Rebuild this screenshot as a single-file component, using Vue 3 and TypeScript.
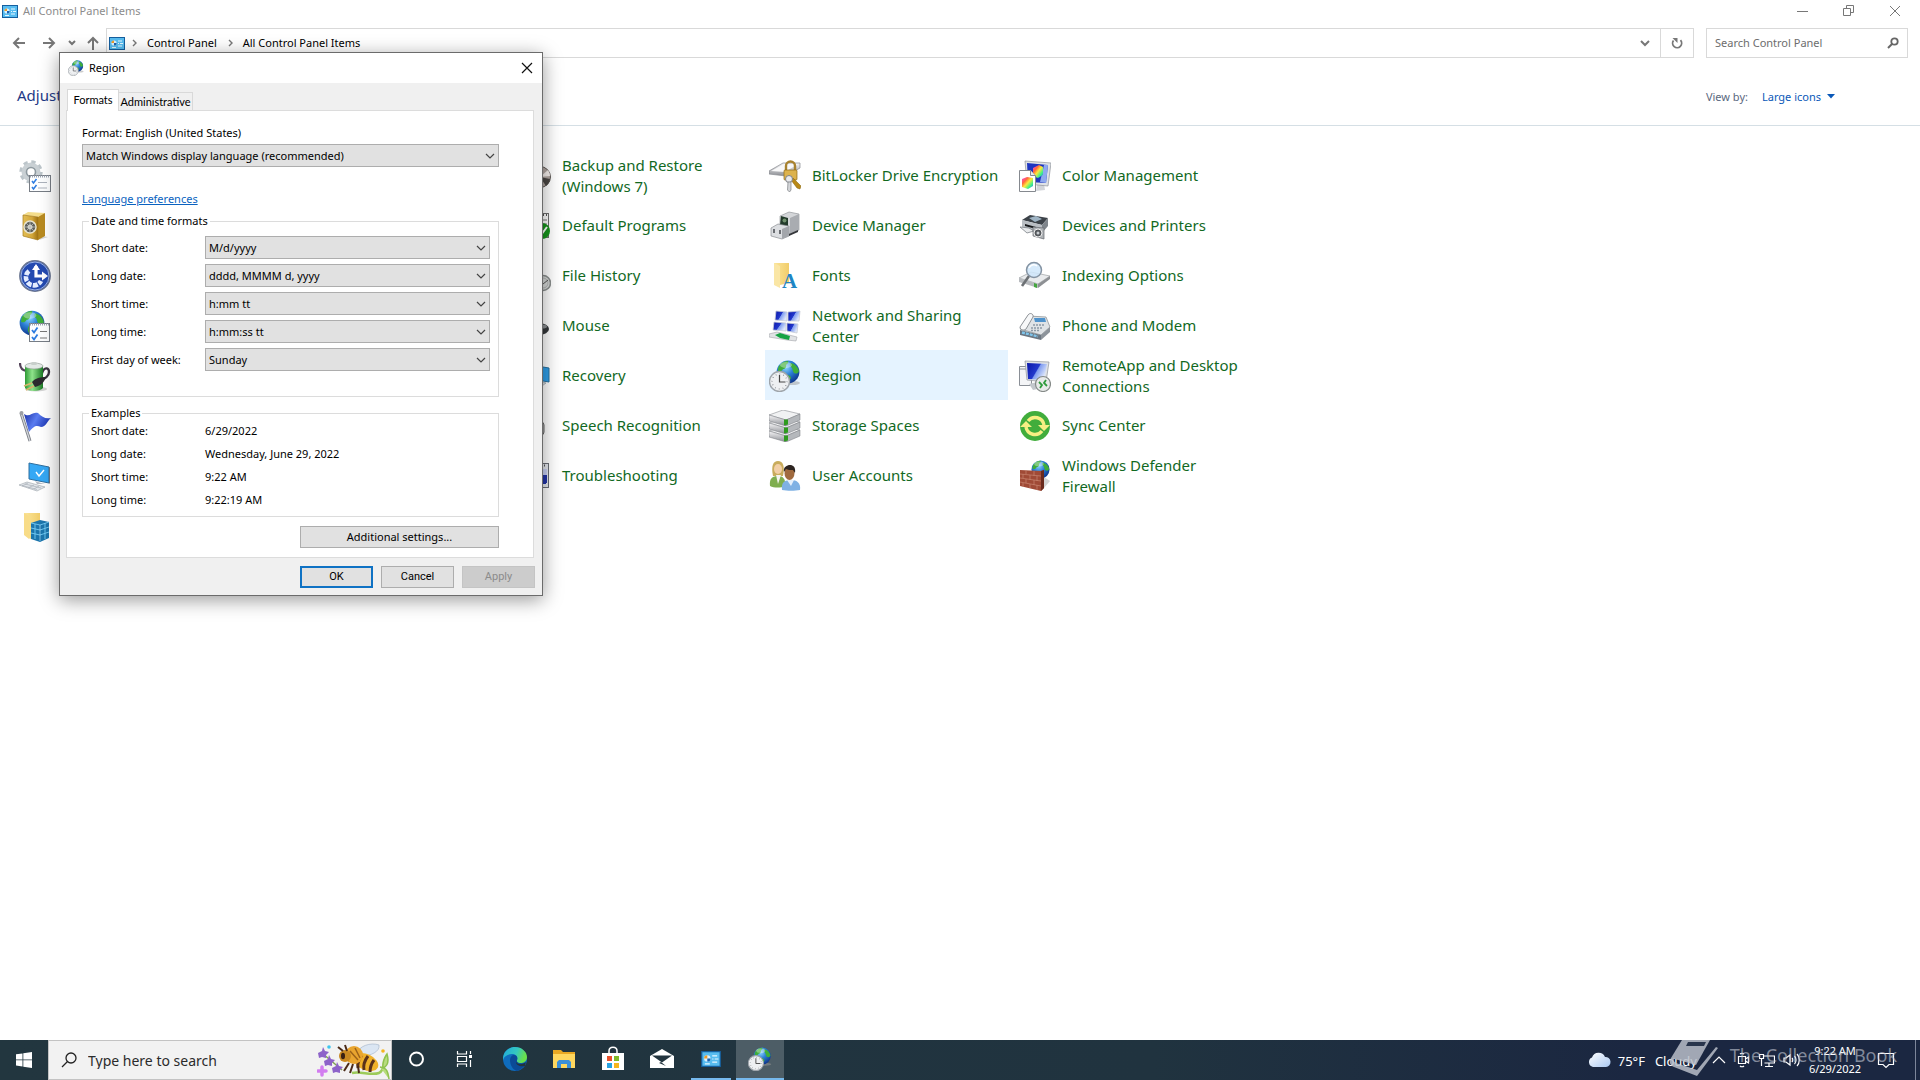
<script setup lang="ts">
import { reactive } from 'vue'

interface PanelItem {
  label: string
  icon: string
  active?: boolean
  iconOnly?: boolean
}

interface FormatRow {
  id: string
  label: string
  value: string
}

const items: PanelItem[] = [
  { label: 'Administrative Tools', icon: 'admin', iconOnly: true },
  { label: 'AutoPlay', icon: 'generic', iconOnly: true },
  { label: 'Backup and Restore (Windows 7)', icon: 'backup' },
  { label: 'BitLocker Drive Encryption', icon: 'bitlocker' },
  { label: 'Color Management', icon: 'color' },
  { label: 'Credential Manager', icon: 'safe', iconOnly: true },
  { label: 'Date and Time', icon: 'generic', iconOnly: true },
  { label: 'Default Programs', icon: 'default' },
  { label: 'Device Manager', icon: 'device' },
  { label: 'Devices and Printers', icon: 'printer' },
  { label: 'Ease of Access Center', icon: 'ease', iconOnly: true },
  { label: 'File Explorer Options', icon: 'generic', iconOnly: true },
  { label: 'File History', icon: 'history' },
  { label: 'Fonts', icon: 'fonts' },
  { label: 'Indexing Options', icon: 'indexing' },
  { label: 'Internet Options', icon: 'internet', iconOnly: true },
  { label: 'Keyboard', icon: 'generic', iconOnly: true },
  { label: 'Mouse', icon: 'mouse' },
  { label: 'Network and Sharing Center', icon: 'network' },
  { label: 'Phone and Modem', icon: 'phone' },
  { label: 'Power Options', icon: 'power', iconOnly: true },
  { label: 'Programs and Features', icon: 'generic', iconOnly: true },
  { label: 'Recovery', icon: 'recovery' },
  { label: 'Region', icon: 'region', active: true },
  { label: 'RemoteApp and Desktop Connections', icon: 'remote' },
  { label: 'Security and Maintenance', icon: 'flag', iconOnly: true },
  { label: 'Sound', icon: 'generic', iconOnly: true },
  { label: 'Speech Recognition', icon: 'speech' },
  { label: 'Storage Spaces', icon: 'storage' },
  { label: 'Sync Center', icon: 'sync' },
  { label: 'System', icon: 'system', iconOnly: true },
  { label: 'Taskbar and Navigation', icon: 'generic', iconOnly: true },
  { label: 'Troubleshooting', icon: 'trouble' },
  { label: 'User Accounts', icon: 'users' },
  { label: 'Windows Defender Firewall', icon: 'firewall' },
  { label: 'Work Folders', icon: 'work', iconOnly: true },
]

const formats = reactive<FormatRow[]>([
  { id: 'short-date', label: 'Short date:', value: 'M/d/yyyy' },
  { id: 'long-date', label: 'Long date:', value: 'dddd, MMMM d, yyyy' },
  { id: 'short-time', label: 'Short time:', value: 'h:mm tt' },
  { id: 'long-time', label: 'Long time:', value: 'h:mm:ss tt' },
  { id: 'first-day', label: 'First day of week:', value: 'Sunday' },
])

const examples = [
  ['Short date:', '6/29/2022'],
  ['Long date:', 'Wednesday, June 29, 2022'],
  ['Short time:', '9:22 AM'],
  ['Long time:', '9:22:19 AM'],
]

const pinned = [
  { name: 'Cortana', icon: 'cortana' },
  { name: 'Task View', icon: 'taskview' },
  { name: 'Microsoft Edge', icon: 'edge' },
  { name: 'File Explorer', icon: 'explorer' },
  { name: 'Microsoft Store', icon: 'store' },
  { name: 'Mail', icon: 'mail' },
  { name: 'Control Panel', icon: 'cpanel', running: true },
  { name: 'Region settings', icon: 'region', running: true, focused: true },
]
</script>

<template>
  <div class="screen">
    <svg class="sprite" width="0" height="0" aria-hidden="true">
      <defs>
        <radialGradient id="g-globe" cx="0.4" cy="0.3" r="0.75">
          <stop offset="0" stop-color="#8fd6ff" /><stop offset="0.45" stop-color="#2b7fd4" /><stop offset="1" stop-color="#0b2f86" />
        </radialGradient>
        <linearGradient id="g-screen" x1="0" y1="0" x2="1" y2="0.5">
          <stop offset="0" stop-color="#0a16a8" /><stop offset="0.55" stop-color="#2238cc" /><stop offset="0.6" stop-color="#7f9cf0" /><stop offset="1" stop-color="#dfe8fb" />
        </linearGradient>
        <linearGradient id="g-cube" x1="0" y1="0" x2="1" y2="1">
          <stop offset="0" stop-color="#ff3cf0" /><stop offset="0.3" stop-color="#ff6a3c" /><stop offset="0.5" stop-color="#ffe93c" /><stop offset="0.75" stop-color="#3cf08a" /><stop offset="1" stop-color="#3c6aff" />
        </linearGradient>
        <linearGradient id="g-gold" x1="0" y1="0" x2="1" y2="0">
          <stop offset="0" stop-color="#e3be55" /><stop offset="0.6" stop-color="#d3a73a" /><stop offset="1" stop-color="#9f7212" />
        </linearGradient>
        <linearGradient id="g-metal" x1="0" y1="0" x2="0" y2="1">
          <stop offset="0" stop-color="#f7f7f8" /><stop offset="1" stop-color="#8d8f95" />
        </linearGradient>
        <linearGradient id="g-green" x1="0" y1="0" x2="1" y2="0">
          <stop offset="0" stop-color="#2d9a35" /><stop offset="0.4" stop-color="#8fe48b" /><stop offset="1" stop-color="#1c7a26" />
        </linearGradient>
        <linearGradient id="g-edge" x1="0" y1="0" x2="1" y2="0.3">
          <stop offset="0" stop-color="#1fa8dd" /><stop offset="0.6" stop-color="#35c8c0" /><stop offset="1" stop-color="#6ae04a" />
        </linearGradient>
        <linearGradient id="g-cloud" x1="0" y1="0" x2="1" y2="1">
          <stop offset="0" stop-color="#ffffff" /><stop offset="1" stop-color="#a9c8f2" />
        </linearGradient>
        <linearGradient id="g-folder" x1="0" y1="0" x2="1" y2="0">
          <stop offset="0" stop-color="#fbe59a" /><stop offset="1" stop-color="#f1cd6a" />
        </linearGradient>
        <linearGradient id="g-flag" x1="0" y1="0" x2="1" y2="0.4">
          <stop offset="0" stop-color="#1b2fa5" /><stop offset="0.5" stop-color="#5a7cf0" /><stop offset="1" stop-color="#1d36b4" />
        </linearGradient>
      </defs>

      <symbol id="globe" viewBox="0 0 24 24">
        <circle cx="12" cy="12" r="11.4" fill="url(#g-globe)" />
        <path d="M3 6C6 2 9 1 12 1c1 2-1 3-2 4 1 2-1 4-3 4-1 2-3 3-5 2 0-2 0-3 1-5zM15 3c4 1 7 4 8 8-1 3-3 3-5 2-2-3-1-5-3-6-1-2-1-3 0-4zM9 15c3-1 6 1 6 3-1 2-3 4-4 5-2-1-4-5-2-8z" fill="#3fae3a" />
        <ellipse cx="10" cy="5" rx="6" ry="3" fill="#fff" opacity=".35" />
      </symbol>

      <symbol id="generic" viewBox="0 0 32 32"><rect x="5" y="5" width="22" height="20" fill="#cfd8e4" stroke="#7b8796" /></symbol>

      <symbol id="admin" viewBox="0 0 32 32">
        <circle cx="12" cy="12" r="7" fill="none" stroke="#c9d0d4" stroke-width="5" />
        <circle cx="12" cy="12" r="10.4" fill="none" stroke="#bcc5ca" stroke-width="2.6" stroke-dasharray="4.4 3.770" />
        <circle cx="12" cy="12" r="4.500" fill="none" stroke="#8e999f" stroke-width="1.6" />
        <rect x="10.500" y="15.500" width="21" height="16" fill="#fdfeff" stroke="#777d85" />
        <path d="M11 16.500h20" stroke="#9ba4b2" stroke-width="2" stroke-dasharray="1 1" />
        <path d="M13 21l1.500 2 3-4M13 27l1.500 2 3-4" fill="none" stroke="#2c7be0" stroke-width="1.500" />
        <path d="M19 22.500h9M19 28h9" stroke="#adb3bd" />
      </symbol>

      <symbol id="safe" viewBox="0 0 32 32">
        <path d="M20 30l9-3-6-1z" fill="#bbb" opacity=".6" />
        <path d="M4 5l5-3 17 1-5 4z" fill="#f4dd8b" /><path d="M19 7l7-4v23l-7 4z" fill="#b88a20" />
        <path d="M4 5l15 2v23L4 26z" fill="url(#g-gold)" stroke="#a57b1c" stroke-width=".7" />
        <circle cx="11" cy="17" r="6" fill="#5d605c" stroke="#e8e4cf" stroke-width="1.500" /><circle cx="11" cy="17" r="2.500" fill="#dcdcd6" />
        <path d="M11 11v12M5 17h12M7 13l8 8M15 13l-8 8" stroke="#bfc0ba" stroke-width=".8" />
      </symbol>

      <symbol id="ease" viewBox="0 0 32 32">
        <circle cx="16" cy="16" r="15.200" fill="#244ab0" stroke="#6c7791" stroke-width="1.400" /><circle cx="16" cy="16" r="14" fill="none" stroke="#b9cdf2" stroke-width=".8" />
        <path d="M10 11a8 8 0 1012 10" fill="none" stroke="#e4edff" stroke-width="4.600" stroke-dasharray="5 1.200" />
        <path d="M17 6v10h7" fill="none" stroke="#fff" stroke-width="3.200" /><path d="M23 11.500l6 4.500-6 4.500zM13 10l4-6 4 6z" fill="#fff" />
      </symbol>

      <symbol id="internet" viewBox="0 0 32 32">
        <use href="#globe" x="0" y="0" width="26" height="26" />
        <rect x="10.500" y="13.500" width="20" height="18" fill="#fdfeff" stroke="#777d85" />
        <path d="M11 14.500h19" stroke="#9ba4b2" stroke-width="2" stroke-dasharray="1 1" />
        <path d="M13 20l2 2.500 3.500-5M13 27l2 2.500 3.500-5" fill="none" stroke="#2c7be0" stroke-width="1.800" /><path d="M21 21.500h7M21 28h7" stroke="#777" />
      </symbol>

      <symbol id="power" viewBox="0 0 32 32">
        <path d="M23 13c2-6 7-6 7-1 0 4-4 7-9 8" fill="none" stroke="#3a3340" stroke-width="2.400" /><path d="M1 3c0 4 2 7 6 8" fill="none" stroke="#54445a" stroke-width="2.200" />
        <ellipse cx="17" cy="29" rx="11" ry="2.500" fill="#aaa" opacity=".5" />
        <path d="M6 6h18v22c-3 4-15 4-18 0z" fill="url(#g-green)" />
        <ellipse cx="15" cy="6" rx="9" ry="3" fill="#e3e9e6" stroke="#8a938e" stroke-width=".6" /><rect x="12" y="2" width="6" height="3" rx="1.500" fill="#c8cfcb" />
        <path d="M27 17c-5 0-11 1-14 5l3 5c5-1 9-4 11-10z" fill="#2c2b2e" /><path d="M13 23l-8 3M15 26l-8 4" stroke="#d8b46a" stroke-width="1.800" />
      </symbol>

      <symbol id="flag" viewBox="0 0 32 32">
        <path d="M2 3l9 28" stroke="#7b7f86" stroke-width="3" /><path d="M2 3l9 28" stroke="#d6d9dd" stroke-width="1.200" /><circle cx="2.500" cy="3" r="2" fill="#9c9fa5" />
        <path d="M5 4c6 4 8-3 14-1 4 4 7 6 13 5-4 3-5 9-10 9-5-2-7-1-12 5z" fill="url(#g-flag)" />
      </symbol>

      <symbol id="system" viewBox="0 0 32 32">
        <path d="M10 3l20 4v16l-20-4z" fill="#35a8f5" stroke="#2f6f9f" /><path d="M30 7l1 .5V24l-1-1z" fill="#6e7780" />
        <path d="M17 12l3 4 5-6" fill="none" stroke="#fff" stroke-width="1.400" /><path d="M16 21l6 2 4 1-8 0z" fill="#b7bcc4" />
        <path d="M0 25l8-3 18 5-8 4z" fill="#e2e6ea" stroke="#9ba2aa" stroke-width=".6" /><path d="M3 25.500l15 4M6 24l16 4M9 23l-6 3M15 25l-6 3M20 26l-5 3" stroke="#a8afb7" stroke-width=".7" />
      </symbol>

      <symbol id="work" viewBox="0 0 32 32">
        <path d="M5 3h16v23l-10 3-6-5z" fill="url(#g-folder)" /><path d="M5 3l5 3v23l-5-4z" fill="#f8dc88" />
        <path d="M12 13l9-3 9 2v16l-9 4-9-3z" fill="#1c76ad" />
        <path d="M12 13l9 2 9-3M12 18l9 2 9-3M12 23l9 2 9-3M16 14v15M26 13v16" fill="none" stroke="#75cdf5" stroke-width=".9" /><path d="M21 15v16" stroke="#bfeaff" stroke-width=".6" />
      </symbol>

      <symbol id="backup" viewBox="0 0 32 32">
        <circle cx="21" cy="17" r="10.500" fill="#b0a5a0" stroke="#5e5956" /><path d="M21 17l8-7a10 10 0 012 6z" fill="#f5efec" /><path d="M21 17l10 2a10 10 0 01-4 7z" fill="#4a4643" /><circle cx="21" cy="17" r="3" fill="#fff" />
      </symbol>
      <symbol id="default" viewBox="0 0 32 32">
        <rect x="8.500" y="3.500" width="21" height="24" fill="#fff" stroke="#707070" /><path d="M12 5h16" stroke="#555" stroke-width="2" stroke-dasharray="1 2" /><path d="M22 10h6M22 14h6M22 18h6" stroke="#777" />
        <circle cx="23" cy="21" r="8" fill="#16951b" /><path d="M19 22l3 3 6-8" fill="none" stroke="#fff" stroke-width="2" />
      </symbol>
      <symbol id="history" viewBox="0 0 32 32">
        <circle cx="24" cy="23" r="7.500" fill="#d7dad9" stroke="#8a8e8d" stroke-width="1.600" /><circle cx="24" cy="23" r="5" fill="none" stroke="#aaa" stroke-width=".8" /><path d="M21 21l3 3 5-4" fill="none" stroke="#555" />
      </symbol>
      <symbol id="mouse" viewBox="0 0 32 32"><ellipse cx="20" cy="19" rx="10" ry="6" fill="#34373a" /><ellipse cx="23" cy="16.500" rx="5" ry="2" fill="#8b8f92" /></symbol>
      <symbol id="recovery" viewBox="0 0 32 32"><path d="M12 5l18 3v14l-18-3z" fill="#2f9fe9" stroke="#26709f" /><path d="M20 21l7 2-4 3-6-2z" fill="#d5dde3" stroke="#8c979f" stroke-width=".6" /></symbol>
      <symbol id="speech" viewBox="0 0 32 32"><rect x="15" y="12" width="10" height="13" rx="3" fill="#b5b5b5" stroke="#666" /></symbol>
      <symbol id="trouble" viewBox="0 0 32 32">
        <rect x="8.500" y="3.500" width="21" height="24" fill="#e6e9ef" stroke="#6a6e76" /><path d="M10 5.500h18" stroke="#555" stroke-width="2" stroke-dasharray="1 2" /><rect x="12" y="9" width="15" height="15" fill="#2335a8" /><path d="M22 9h6v6h-6z" fill="#c9d0f4" /><path d="M22 15h6v8h-6z" fill="#2335a8" />
      </symbol>

      <symbol id="bitlocker" viewBox="0 0 32 32">
        <path d="M0 11l14-8h17v5l-14 8-17-2z" fill="url(#g-metal)" stroke="#888b90" stroke-width=".7" /><path d="M2 11l13-7 14 0-13 8z" fill="#f8f8f9" />
        <path d="M17 11V6a4.500 4.500 0 019 0v5" fill="none" stroke="#a8822f" stroke-width="2.400" /><rect x="15" y="10" width="13" height="10" rx="1" fill="#ddb34d" stroke="#8f6a14" stroke-width=".7" />
        <path d="M24 18l8 8-1 3-3-1-6-8z" fill="#b98916" stroke="#83600c" stroke-width=".5" />
        <circle cx="20" cy="19" r="3.500" fill="#e9eaec" stroke="#7c7f84" /><path d="M19 22h3v8l-1.500 2-2-2z" fill="#d4d6d9" stroke="#7c7f84" stroke-width=".7" />
      </symbol>
      <symbol id="color" viewBox="0 0 32 32">
        <path d="M18 25l7-1 1 6-9 1z" fill="#d2d5da" /><path d="M6 1l26 2-3 23-21-2z" fill="#dfe2e6" stroke="#8f949b" stroke-width=".7" /><path d="M8 3l21 2-2 18-18-1z" fill="#1e35c0" /><path d="M25 5l4 0-2 18-6-1z" fill="#8ea9ee" />
        <path d="M14 8l6-3 4 2v8l-5 3-5-2z" fill="url(#g-cube)" />
        <path d="M.5 10.500h11l5 5v16H.500z" fill="#fff" stroke="#85898f" /><path d="M11.500 10.500v5h5" fill="#e8e8e8" stroke="#85898f" />
        <path d="M3 19l5-2 6 1v8l-5 3-6-2z" fill="url(#g-cube)" />
      </symbol>
      <symbol id="device" viewBox="0 0 32 32">
        <path d="M11 6l9-4 10 2v16l-9 4-10-4z" fill="#d4d6d9" stroke="#86898e" stroke-width=".6" /><path d="M21 24l9-4V4l-9 4z" fill="#a9acb1" />
        <path d="M12 6l7 2v9l-8-2z" fill="#223a2a" /><circle cx="15.500" cy="10.500" r="2" fill="#6f8f6c" />
        <path d="M2 18l7-4 11 2v10l-7 3-11-3z" fill="#dcdee1" stroke="#7b7e83" stroke-width=".6" /><path d="M13 19l7-3v10l-7 3z" fill="#a3a6ab" /><path d="M4 19h2v4H4zM10 20h2v4h-2z" fill="#6a6d72" /><path d="M20 24l9-4v2l-9 4z" fill="#34363a" />
      </symbol>
      <symbol id="printer" viewBox="0 0 32 32">
        <path d="M3 10l8-5 18 3-6 7z" fill="#3c4248" /><path d="M10 8l7-2 6 3-7 3z" fill="#9fb4c4" /><path d="M3 10l20 5v8L3 17z" fill="#b9bec3" /><path d="M23 15l6-7v8l-6 7z" fill="#7f858b" />
        <path d="M6 14l11 3v2L6 16z" fill="#17191b" /><path d="M1 17l9 1 5 3-7 2z" fill="#e8eaec" stroke="#6d7278" stroke-width=".7" />
        <path d="M14 17l11 1v11l-11-3z" fill="#aeb2b6" stroke="#65696e" stroke-width=".7" /><circle cx="19" cy="23" r="4" fill="#54585c" stroke="#eee" /><circle cx="19" cy="23" r="1.500" fill="#c8ccd0" />
      </symbol>
      <symbol id="fonts" viewBox="0 0 32 32">
        <path d="M5 3h15v20l-9 2-6-2z" fill="url(#g-folder)" /><path d="M5 3l6 3v22l-6-3z" fill="#fae6a5" />
        <text x="13" y="28" font-family="Liberation Serif, serif" font-size="21" font-weight="700" fill="#1f86c4">A</text>
      </symbol>
      <symbol id="indexing" viewBox="0 0 32 32">
        <path d="M0 18l12-6 19 4-12 8z" fill="#e9ebed" stroke="#8f9397" stroke-width=".6" /><path d="M0 18l19 6v4L0 22z" fill="#b7babe" /><path d="M19 24l12-8v3l-12 9z" fill="#8d9094" /><path d="M15 23l3 1v4l-3-1z" fill="#45a63f" />
        <path d="M10 16L3 26" stroke="#6c7074" stroke-width="2.600" /><circle cx="15" cy="10" r="7.500" fill="#cfe6fa" fill-opacity=".85" stroke="#8493a3" stroke-width="1.500" /><path d="M10 8c2-4 6-4 8-2" stroke="#fff" stroke-width="1.500" fill="none" />
      </symbol>
      <symbol id="network" viewBox="0 0 32 32">
        <g fill="url(#g-screen)" stroke="#c9cdd6" stroke-width=".8"><path d="M7 1l11 1v9L6 10z" /><path d="M19 2l12-1-1 10-11 0z" /><path d="M5 12l12 1v8L4 20z" /><path d="M18 13l11 1-1 9-10-2z" /></g>
        <path d="M0 24l8-2 20 5-1 4-9-1L0 27z" fill="#e1e3e5" stroke="#a2a5a9" stroke-width=".6" /><path d="M6 25l5-2 10 3-1 4-9-2z" fill="#17a343" />
      </symbol>
      <symbol id="phone" viewBox="0 0 32 32">
        <path d="M1 19l8-13 18 1 4 10-9 8z" fill="#dfe3e6" stroke="#81868b" stroke-width=".7" /><path d="M1 20l21 5v5L1 25z" fill="#6b7681" /><path d="M22 25l9-8v5l-9 8z" fill="#8d949b" /><path d="M3 22.500l16 4" stroke="#7fc4ea" stroke-width="2.400" stroke-dasharray="3 1" />
        <path d="M15 8l11 0 1 4-11 0z" fill="#4f93cc" /><path d="M1 17L9 5c2-3 6-1 5 2L7 19c-2 2-6 1-6-2z" fill="#f7f8f9" stroke="#81868b" stroke-width=".9" />
        <path d="M14 15h11M12 18h11M12 20.500h8" stroke="#8d9ba7" stroke-width="1.400" stroke-dasharray="2 1" />
      </symbol>
      <symbol id="region" viewBox="0 0 32 32">
        <ellipse cx="23" cy="23" rx="8" ry="2" fill="#999" opacity=".5" /><use href="#globe" x="7" y="0" width="24" height="24" />
        <circle cx="10.500" cy="21.500" r="10" fill="#eef0f2" stroke="#9fa5ab" stroke-width="1.400" /><circle cx="10.500" cy="21.500" r="7.500" fill="none" stroke="#70757a" stroke-width="1.200" stroke-dasharray=".7 3.200" />
        <path d="M10.500 15v7h6" fill="none" stroke="#444" stroke-width="1.200" />
      </symbol>
      <symbol id="remote" viewBox="0 0 32 32">
        <path d="M.5 6.500h12v19H.500z" fill="#f4f5f7" stroke="#8a8f96" /><path d="M1 9h11" stroke="#8a8f96" />
        <path d="M10 24l8-2 5 6-9 2z" fill="#c3c7cc" /><path d="M6 1l24 1-3 20-19-2z" fill="#dfe2e6" stroke="#8f949b" stroke-width=".7" /><path d="M8 3l20 1-3 16-16-1z" fill="url(#g-screen)" />
        <circle cx="24" cy="24" r="7.500" fill="#e8eae9" stroke="#858a88" stroke-width="1.200" /><path d="M20 22l3 3-2 3M28 26l-3-3 2-3" fill="none" stroke="#2f9b3c" stroke-width="1.800" />
      </symbol>
      <symbol id="storage" viewBox="0 0 32 32">
        <g id="drive"><path d="M0 21l14-5 17 4-14 6z" fill="#f1f2f3" stroke="#8c8f94" stroke-width=".6" /><path d="M0 21l17 5v6L0 27z" fill="url(#g-metal)" stroke="#77797e" stroke-width=".5" /><path d="M17 26l14-6v6l-14 6z" fill="#b5b8bc" stroke="#77797e" stroke-width=".5" /><path d="M15 25.500l4 0v5l-4 1z" fill="#2e9b1e" /></g>
        <use href="#drive" y="-8" /><use href="#drive" y="-16" />
      </symbol>
      <symbol id="sync" viewBox="0 0 32 32">
        <circle cx="16" cy="16" r="15" fill="#41ad3c" /><path d="M9 11a9 9 0 0116 4M23 21a9 9 0 01-16-4" fill="none" stroke="#f7ef83" stroke-width="3.400" />
        <path d="M19 15h12l-6 6zM1 17h12l-6-6z" fill="#f7ef83" />
      </symbol>
      <symbol id="users" viewBox="0 0 32 32">
        <path d="M1 26c-1-8 3-10 8-10s8 3 7 10c-4 2-11 2-15 0z" fill="#7fae4f" /><path d="M4 16C2 6 4 1 9 1s7 5 5 15z" fill="#c9ac5c" /><ellipse cx="9" cy="9" rx="4" ry="5" fill="#f2cfa6" />
        <path d="M7 15l2 9 3-9z" fill="#f5f5ef" /><path d="M13 30c-1-8 3-10 9-10s10 3 9 10c-5 1-13 1-18 0z" fill="#7fb1e4" /><ellipse cx="20.500" cy="13" rx="5" ry="7" fill="#a06a3e" /><path d="M15 12c-1-5 3-7 6-7s6 2 5 8l-2-3c-3 0-5 0-7-1z" fill="#2d2521" /><path d="M18 20l4 6 3-6z" fill="#e6f0fb" />
      </symbol>
      <symbol id="firewall" viewBox="0 0 32 32">
        <use href="#globe" x="12" y="0" width="19" height="19" /><path d="M25 17l6 4-6 7z" fill="#aaa" opacity=".5" />
        <path d="M1 10l21 1 3-1v18l-3 3L1 26z" fill="#a04a36" /><path d="M22 11l3-1v18l-3 3z" fill="#6b2b1d" />
        <path d="M1 14l21 2M1 18l21 3M1 22l21 4M7 10v4M15 11v5M4 14v4M11 15v5M18 16v5M7 19v4M15 20v5M4 23v4M11 24v4M18 25v5" stroke="#c98570" stroke-width=".7" />
      </symbol>

      <symbol id="cpanel" viewBox="0 0 16 13">
        <rect x=".5" y=".5" width="15" height="12" fill="#58bdf0" stroke="#155f9f" />
        <circle cx="5" cy="6" r="2.600" fill="#d9f1ff" /><path d="M5 6V3.400A2.600 2.600 0 002.400 6z" fill="#f19b27" /><path d="M5 6h2.600A2.600 2.600 0 015 8.600z" fill="#1d62b0" />
        <path d="M9 3.500h4v1H9zM9 6h1v1H9zM11 6h3v1h-3zM9 8.500h4v1H9zM3 10h4v1H3z" fill="#e6f7ff" />
      </symbol>

      <symbol id="cortana" viewBox="0 0 32 32"><circle cx="15.500" cy="16" r="6.500" fill="none" stroke="#fff" stroke-width="2" /></symbol>
      <symbol id="taskview" viewBox="0 0 32 32"><path d="M7.500 8v3h9V8M7.500 24v-3h9v3M7.500 13.500h9v5h-9zM20.500 8v3M20.500 17v7" fill="none" stroke="#fff" stroke-width="1.200" /><path d="M19 12h3v3h-3z" fill="#fff" /></symbol>
      <symbol id="edge" viewBox="0 0 32 32">
        <circle cx="16" cy="16" r="12" fill="#0f6cbd" /><path d="M4 15C5 7 11 4 16 4c7 0 12 5 12 10 0 4-3 6-7 6-3 0-4-1-3-3 1-3-1-6-5-6-4 0-8 2-9 6z" fill="url(#g-edge)" />
        <path d="M11 17c0-3 2-5 4-5 3 0 4 3 3 5-1 3 4 4 7 3l1 2c-2 3-5 5-8 6-4-1-7-6-7-11z" fill="#0b4a97" /><path d="M17 19c2 3 6 3 10 0l-1 4c-5 1-9-1-9-4z" fill="#22333d" />
      </symbol>
      <symbol id="explorer" viewBox="0 0 32 32"><path d="M5 7h8l2 2h12v16H5z" fill="#e9a823" /><path d="M5 11h22v14H5z" fill="#ffd75e" /><path d="M9 25v-6l2-2h10l2 2v6h-4v-4h-6v4z" fill="#3b8fd8" /></symbol>
      <symbol id="store" viewBox="0 0 32 32"><path d="M12 11V8c0-5 8-5 8 0v3" fill="none" stroke="#fff" stroke-width="1.500" /><path d="M5 10h22v17H5z" fill="#fff" /><path d="M10 13h5v5h-5z" fill="#e8502a" /><path d="M17 13h5v5h-5z" fill="#7fba28" /><path d="M10 20h5v5h-5z" fill="#27a3e3" /><path d="M17 20h5v5h-5z" fill="#f8b61c" /></symbol>
      <symbol id="mail" viewBox="0 0 32 32"><path d="M4 13L16 6l12 7v12H4z" fill="#fff" /><path d="M6 12.500h20L16 19.500z" fill="#22343e" /><path d="M15 19l5 4-7-3z" fill="#22343e" /></symbol>
    </svg>

    <main class="window">
      <header class="titlebar">
        <svg width="16" height="13"><use href="#cpanel" /></svg>
        <span class="title-text">All Control Panel Items</span>
        <div class="caption">
          <button type="button" aria-label="Minimize"><svg width="12" height="12" viewBox="0 0 12 12"><path d="M0 6.500h11" stroke="#777" /></svg></button>
          <button type="button" aria-label="Restore"><svg width="12" height="12" viewBox="0 0 12 12"><path d="M.5 3.500h7v7h-7zM3.500 3V.500h7v7H8" fill="none" stroke="#777" /></svg></button>
          <button type="button" aria-label="Close"><svg width="12" height="12" viewBox="0 0 12 12"><path d="M1 1l10 10M11 1L1 11" stroke="#777" /></svg></button>
        </div>
      </header>

      <nav class="toolbar">
        <div class="arrows">
          <button type="button" aria-label="Back"><svg width="14" height="14" viewBox="0 0 14 14"><path d="M13 7H2M7 2L2 7l5 5" class="arrow" /></svg></button>
          <button type="button" aria-label="Forward"><svg width="14" height="14" viewBox="0 0 14 14"><path d="M1 7h11M7 2l5 5-5 5" class="arrow" /></svg></button>
          <button type="button" class="narrow" aria-label="Recent locations"><svg width="8" height="8" viewBox="0 0 8 8"><path d="M1 2l3 3 3-3" class="arrow" /></svg></button>
          <button type="button" class="up" aria-label="Up"><svg width="14" height="14" viewBox="0 0 14 14"><path d="M7 14V2M2 7l5-5 5 5" class="arrow" /></svg></button>
        </div>
        <div class="address">
          <svg width="16" height="13"><use href="#cpanel" /></svg>
          <svg class="sep" width="6" height="8" viewBox="0 0 6 8"><path d="M1 1l3 3-3 3" /></svg>
          <a href="#control-panel">Control Panel</a>
          <svg class="sep" width="6" height="8" viewBox="0 0 6 8"><path d="M1 1l3 3-3 3" /></svg>
          <a href="#all-items">All Control Panel Items</a>
          <button type="button" class="drop" aria-label="Previous locations"><svg width="12" height="10" viewBox="0 0 12 10"><path d="M2 3l4 4 4-4" fill="none" stroke="#777" stroke-width="2" /></svg></button>
          <button type="button" class="refresh" aria-label="Refresh"><svg width="14" height="14" viewBox="0 0 14 14"><path d="M3.500 4.500a4.500 4.500 0 107-.3" fill="none" stroke="#777" stroke-width="1.800" /><path d="M2.500 2h5v5z" fill="#777" /></svg></button>
        </div>
        <label class="search">
          <input type="text" placeholder="Search Control Panel" aria-label="Search Control Panel" />
          <svg width="12" height="12" viewBox="0 0 12 12"><circle cx="7.500" cy="4.500" r="3.200" fill="none" stroke="#666" stroke-width="1.800" /><path d="M5 7l-4 4" stroke="#666" stroke-width="2" /></svg>
        </label>
      </nav>

      <div class="heading">
        <h1 aria-label="Adjust your computer’s settings">Adjust</h1>
        <div class="view-by">
          <span>View by:</span>
          <button type="button">Large icons <svg width="8" height="5" viewBox="0 0 8 5"><path d="M0 0h8L4 4.500z" fill="#0a58b8" /></svg></button>
        </div>
      </div>

      <div class="items">
        <a v-for="item in items" :key="item.label" href="#item" class="item" :class="{ active: item.active }" :aria-label="item.label">
          <svg width="32" height="32" aria-hidden="true"><use :href="'#' + item.icon" /></svg>
          <span v-if="!item.iconOnly">{{ item.label }}</span>
        </a>
      </div>
    </main>

    <section class="dialog" role="dialog" aria-label="Region">
      <header class="dialog-title">
        <svg width="16" height="16" aria-hidden="true"><use href="#region" /></svg>
        <span>Region</span>
        <button type="button" aria-label="Close dialog"><svg width="12" height="12" viewBox="0 0 12 12"><path d="M1 1l10 10M11 1L1 11" stroke="#111" stroke-width="1.200" /></svg></button>
      </header>
      <div class="tabs" role="tablist">
        <button type="button" role="tab" class="selected" aria-selected="true">Formats</button>
        <button type="button" role="tab" aria-selected="false">Administrative</button>
      </div>
      <div class="panel">
        <label class="format-label" for="format">Format: English (United States)</label>
        <div class="combo">
          <select id="format"><option>Match Windows display language (recommended)</option></select>
          <svg width="10" height="6" viewBox="0 0 10 6"><path d="M1 1l4 4 4-4" /></svg>
        </div>
        <a class="lang" href="#language">Language preferences</a>
        <fieldset class="formats">
          <legend>Date and time formats</legend>
          <div v-for="row in formats" :key="row.id" class="row">
            <label :for="row.id">{{ row.label }}</label>
            <div class="combo">
              <select :id="row.id" v-model="row.value"><option>{{ row.value }}</option></select>
              <svg width="10" height="6" viewBox="0 0 10 6"><path d="M1 1l4 4 4-4" /></svg>
            </div>
          </div>
        </fieldset>
        <fieldset class="examples">
          <legend>Examples</legend>
          <div v-for="[name, value] in examples" :key="name" class="row">
            <span>{{ name }}</span><span>{{ value }}</span>
          </div>
        </fieldset>
        <button type="button" class="push additional">Additional settings...</button>
      </div>
      <footer class="actions">
        <button type="button" class="push primary">OK</button>
        <button type="button" class="push">Cancel</button>
        <button type="button" class="push" disabled>Apply</button>
      </footer>
    </section>

    <footer class="taskbar">
      <button type="button" class="start" aria-label="Start"><svg width="16" height="16" viewBox="0 0 16 16"><path d="M0 2.300l6.500-.9v6.100H0zM7.300 1.300L16 0v7.500H7.300zM0 8.300h6.500v6.200L0 13.600zM7.300 8.300H16V16l-8.700-1.300z" fill="#fff" /></svg></button>
      <label class="task-search">
        <svg width="16" height="16" viewBox="0 0 16 16"><circle cx="10" cy="6" r="5" fill="none" stroke="#222" stroke-width="1.300" /><path d="M6.500 9.500L1 15" stroke="#222" stroke-width="1.300" /></svg>
        <input type="text" placeholder="Type here to search" aria-label="Type here to search" />
        <svg width="74" height="38" viewBox="0 0 74 38">
          <path d="M70 14c-4 6-1 14-8 18-8 3-18-2-27 0" fill="none" stroke="#9ccb5a" stroke-width="2.500" /><path d="M63 26c8 1 8 6 9 12M66 27c-1-7 2-11 4-14 2 7 1 12-4 14z" stroke="#8fc24e" stroke-width="1.500" fill="#b7dc7d" />
          <path d="M5 12l20 17" stroke="#7fa651" stroke-width="1.500" /><g fill="#8d63c9"><path d="M1 12l4-2 1-4 2 4 4 1-3 3 0 3-4-1-3 1z" /><path d="M7 20l4-2 1-4 2 4 4 1-3 3 0 3-4-1-3 1z" /><path d="M15 27l4-2 1-4 2 4 4 1-3 3 0 3-4-1-3 1z" /></g>
          <path d="M5 26v8M1 30h8" stroke="#d27df0" stroke-width="3.500" stroke-linecap="round" /><circle cx="12" cy="6" r="1.800" fill="#3ec5ef" /><circle cx="66" cy="10" r="1.800" fill="#f4b51f" />
          <path d="M40 13C41 5 54 1 62 4c1 7-8 10-17 12z" fill="#dbe6f3" stroke="#a9b9cd" stroke-width=".7" />
          <ellipse cx="49" cy="21" rx="13" ry="8" fill="#f0b12a" transform="rotate(25 49 21)" /><path d="M45 14c-3 4-5 8-4 13M51 15c-3 4-5 9-4 14M57 19c-3 4-4 7-4 12" fill="none" stroke="#5a321a" stroke-width="3" /><circle cx="37" cy="14" r="9" fill="#e9a52f" /><path d="M33 10l8 9M38 7l5 10" stroke="#9d6318" stroke-width="1.500" />
          <circle cx="28" cy="15" r="6" fill="#c98921" /><ellipse cx="26" cy="15" rx="2" ry="3.200" fill="#3a2113" /><path d="M26 10l-5-4M30 10l-2-6M32 22l-5 8M36 23l-3 9M41 25l1 7" fill="none" stroke="#4a2a18" stroke-width="2" />
        </svg>
      </label>
      <button v-for="app in pinned" :key="app.name" type="button" class="app" :class="{ running: app.running, focused: app.focused }" :aria-label="app.name">
        <svg :width="app.icon === 'cpanel' ? 20 : app.icon === 'region' ? 24 : 32" :height="app.icon === 'cpanel' ? 16 : app.icon === 'region' ? 24 : 32"><use :href="'#' + app.icon" /></svg>
      </button>
      <div class="tray">
        <svg width="24" height="16" viewBox="0 0 24 16"><path d="M6 15a5 5 0 01-1-9.500A7 7 0 0118 5a5 5 0 011 10z" fill="url(#g-cloud)" /></svg>
        <span class="weather"><span>75°F</span><span>Cloudy</span></span>
        <div class="tray-icons">
          <svg width="16" height="16" viewBox="0 0 16 16"><path d="M2 11l6-6 6 6" /></svg>
          <svg width="16" height="16" viewBox="0 0 16 16"><path d="M3.500 4.500h7v7h-7zM10.500 7l3-2v6l-3-2M5 2c1-1 3-1 4 0M5 14c1 1 3 1 4 0" /></svg>
          <svg width="16" height="16" viewBox="0 0 16 16"><path d="M4.500 4h11v7h-10M.500 2.500h4v4h-4zM2.500 6.500V14M10 11v3M6 14.500h8" /></svg>
          <svg width="18" height="16" viewBox="0 0 18 16"><path d="M1 6h2l4-3v10l-4-3H1zM9 6c1 1 1 3 0 4M11.500 4c2 2 2 6 0 8M14 2c3 3 3 9 0 12" /></svg>
        </div>
        <time class="clock"><span>9:22 AM</span><span>6/29/2022</span></time>
        <button type="button" class="notify" aria-label="Notifications"><svg width="18" height="18" viewBox="0 0 18 18"><path d="M1.500 2.500h15v11h-4.500l-3 3-3-3h-4.500z" /></svg></button>
        <i class="peek"></i>
      </div>
      <div class="watermark" aria-hidden="true">
        <svg width="50" height="40" viewBox="0 0 50 40"><path d="M13 0h28L27 25 2 18z" fill="#b9bec9" fill-opacity=".85" /><path d="M19 2h18l-2 4H17z" fill="#1c2940" opacity=".9" /><path d="M2 18c-3 4 0 8 3 9l23 9 21-28-2-1-19 23-21-7c-3-2-3-3-1-5z" fill="#b9bec9" fill-opacity=".85" /></svg>
        <span>The Collection Book</span>
      </div>
    </footer>
  </div>
</template>

<style>
body {
  margin: 0;
}
</style>

<style scoped>
.screen {
  position: relative;
  display: flex;
  flex-direction: column;
  min-height: 100vh;
  background: #fff;
  font: 11px/16px 'Noto Sans', sans-serif;
  color: #000;
}
.screen * {
  box-sizing: border-box;
}
.sprite {
  position: absolute;
}
svg {
  display: block;
  flex: none;
}
button {
  display: flex;
  align-items: center;
  justify-content: center;
  padding: 0;
  border: 0;
  background: none;
  color: inherit;
  font: inherit;
}
a {
  color: inherit;
  text-decoration: none;
}
input {
  min-width: 0;
  padding: 0;
  border: 0;
  outline: 0;
  background: none;
  font: inherit;
}
.window {
  flex: 1;
}

.titlebar {
  display: flex;
  align-items: center;
  height: 22px;
  padding: 0 2px;
  color: #8c8c8c;
}
.title-text {
  margin-left: 5px;
}
.caption {
  display: flex;
  margin-left: auto;
}
.caption button {
  width: 46px;
  height: 20px;
}

.toolbar {
  display: flex;
  align-items: center;
  margin-top: 6px;
  padding-right: 12px;
}
.arrows {
  display: flex;
  align-items: center;
  width: 106px;
  padding-left: 4px;
}
.arrows button {
  width: 30px;
}
.arrows .narrow {
  width: 16px;
}
.arrows .up {
  width: 26px;
}
.arrow {
  fill: none;
  stroke: #777;
  stroke-width: 2;
}
.address,
.search {
  display: flex;
  align-items: center;
  height: 30px;
  border: 1px solid #d9d9d9;
}
.address {
  flex: 1;
  padding-left: 2px;
}
.sep {
  margin: 0 9px 0 7px;
  fill: none;
  stroke: #777;
  stroke-width: 1.4;
}
a + .sep {
  margin-left: 11px;
}
.address a {
  white-space: nowrap;
}
.drop {
  width: 30px;
  height: 28px;
  margin-left: auto;
}
.refresh {
  width: 33px;
  height: 28px;
  border-left: 1px solid #d9d9d9;
}
.search {
  width: 202px;
  margin-left: 12px;
  padding: 0 8px;
}
.search input {
  flex: 1;
}
input::placeholder {
  color: #6d6d6d;
  opacity: 1;
}

.heading {
  display: flex;
  align-items: center;
  justify-content: space-between;
  height: 68px;
  padding: 8px 85px 0 17px;
  border-bottom: 1px solid #d5dfe5;
}
.heading h1 {
  margin: 0 0 2px;
  font-size: 15px;
  font-weight: 400;
  line-height: 20px;
  color: #1e3a87;
}
.view-by {
  display: flex;
  gap: 14px;
  margin-top: 2px;
  color: #5a6780;
}
.view-by button {
  gap: 6px;
  color: #0a58b8;
}

.items {
  display: grid;
  grid-template-columns: repeat(5, 243px);
  grid-auto-rows: 50px;
  column-gap: 7px;
  padding: 24px 0 0 15px;
}
.item {
  display: flex;
  align-items: center;
  gap: 11px;
  padding: 1px 4px 0;
  color: #12691f;
  font-size: 15px;
  line-height: 21px;
}
.item span {
  max-width: 188px;
}
.item.active {
  background: #e5f3ff;
}

.dialog {
  position: absolute;
  top: 52px;
  left: 59px;
  width: 484px;
  border: 1px solid #6b6b6b;
  background: #f0f0f0;
  box-shadow: 0 4px 18px rgba(0, 0, 0, 0.4);
}
.dialog-title {
  display: flex;
  align-items: center;
  gap: 5px;
  height: 30px;
  padding: 0 8px;
  background: #fff;
}
.dialog-title button {
  width: 14px;
  margin-left: auto;
}
.tabs {
  display: flex;
  align-items: flex-end;
  height: 27px;
  padding-left: 7px;
  font-family: Lato, sans-serif;
}
.tabs button {
  width: 74px;
  height: 18px;
  border: 1px solid #d9d9d9;
  border-bottom: 0;
  border-left: 0;
}
.tabs .selected {
  position: relative;
  z-index: 1;
  width: 52px;
  height: 22px;
  margin-bottom: -1px;
  padding-bottom: 1px;
  border-left: 1px solid #d9d9d9;
  background: #fff;
}
.panel {
  display: flex;
  flex-direction: column;
  margin: 0 8px 0 6px;
  padding: 14px 34px 9px 15px;
  border: 1px solid #dcdcdc;
  background: #fff;
}
.combo {
  position: relative;
  display: flex;
  align-items: center;
}
.combo select {
  width: 100%;
  height: 23px;
  padding: 0 24px 0 3px;
  appearance: none;
  border: 1px solid #adadad;
  border-radius: 0;
  background: #e1e1e1;
  color: #000;
  font: inherit;
}
.combo svg {
  position: absolute;
  right: 4px;
  fill: none;
  stroke: #444;
  stroke-width: 1.2;
  pointer-events: none;
}
.format-label {
  margin-bottom: 3px;
}
.lang {
  align-self: flex-start;
  margin: 24px 0 6px;
  color: #0a62c0;
  text-decoration: underline;
}
fieldset {
  display: flex;
  flex-direction: column;
  min-width: 0;
  margin: 0;
  padding: 0 8px;
  border: 1px solid #dcdcdc;
}
legend {
  margin-left: -2px;
  padding: 0 2px;
}
.row {
  display: grid;
  grid-template-columns: 114px 1fr;
  align-items: center;
}
.formats {
  gap: 5px;
  padding-top: 7px;
  padding-bottom: 25px;
}
.examples {
  gap: 7px;
  margin-top: 8px;
  padding-top: 2px;
  padding-bottom: 8px;
}
.push {
  width: 73px;
  height: 22px;
  border: 1px solid #adadad;
  background: #e1e1e1;
}
.push:disabled {
  border-color: #c4c4c4;
  background: #ccc;
  color: #8b8b8b;
}
.additional {
  align-self: flex-end;
  width: 199px;
  margin-top: 9px;
}
.primary {
  border: 2px solid #0f72c4;
}
.actions {
  display: flex;
  justify-content: flex-end;
  gap: 8px;
  padding: 8px 7px 7px;
  font-family: Roboto, sans-serif;
}

.taskbar {
  position: relative;
  display: flex;
  height: 40px;
  background: linear-gradient(90deg, #22363f, #20333f 60%, #1b2741 85%);
  color: #fff;
}
.start {
  width: 48px;
}
.task-search {
  display: flex;
  align-items: center;
  width: 344px;
  padding-left: 12px;
  border: 1px solid #c3c3c3;
  background: #f2f2f2;
}
.task-search input {
  flex: 1;
  margin-left: 11px;
  padding-top: 2px;
  font-size: 14px;
}
.task-search input::placeholder {
  color: #2b2b2b;
}
.app {
  width: 49px;
  border-bottom: 2px solid transparent;
}
.app.running {
  width: 40px;
  margin-left: 5px;
  border-color: #76b9ed;
}
.app.focused {
  width: 48px;
  background: #4d5d66;
}
.tray {
  display: flex;
  align-items: center;
  margin-left: auto;
  padding-right: 4px;
}
.weather {
  display: flex;
  gap: 10px;
  margin: 2px 14px 0 7px;
  font-size: 13px;
}
.tray-icons {
  display: flex;
  gap: 8px;
}
.tray-icons svg,
.notify svg {
  fill: none;
  stroke: #fff;
  stroke-width: 1.2;
}
.clock {
  display: flex;
  flex-direction: column;
  align-items: center;
  width: 68px;
  line-height: 18px;
}
.notify {
  width: 34px;
}
.peek {
  width: 1px;
  height: 40px;
  margin-left: 12px;
  background: #7d869a;
}
.watermark {
  position: absolute;
  right: 23px;
  display: flex;
  gap: 11px;
  color: rgba(200, 205, 216, 0.6);
  font-size: 18px;
  line-height: 30px;
  pointer-events: none;
}
</style>
